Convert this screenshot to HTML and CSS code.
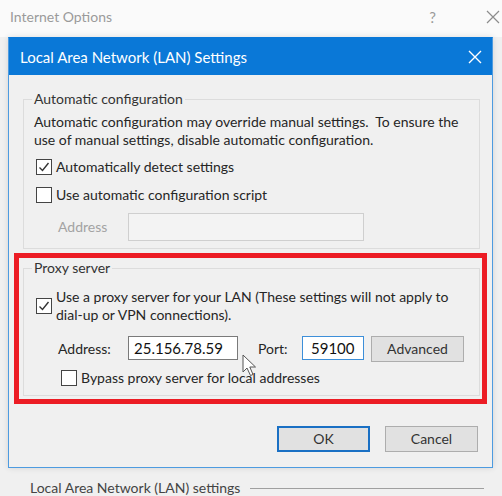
FILE: index.html
```
<!DOCTYPE html>
<html lang="en">
<head>
    <meta charset="UTF-8">
    <meta name="viewport" content="width=device-width, initial-scale=1.0">
    <title>Local Area Network (LAN) Settings</title>
    <link rel="stylesheet" href="styles.css">
</head>
<body>
    <div class="window">
        <div class="window-title">
            <span class="window-name">Internet Options</span>
            <span class="window-help">?</span>
            <svg class="window-close" width="14" height="14" viewBox="0 0 14 14">
                <path d="M1 1 L13 13 M13 1 L1 13" stroke="#8c8c8c" stroke-width="1.2" fill="none"/>
            </svg>
        </div>
        <div class="window-body">
            <div class="dialog">
                <div class="dialog-title">
                    <span>Local Area Network (LAN) Settings</span>
                    <svg class="dialog-close" width="14" height="14" viewBox="0 0 14 14">
                        <path d="M1 1 L13 13 M13 1 L1 13" stroke="#ffffff" stroke-width="1.4" fill="none"/>
                    </svg>
                </div>
                <div class="dialog-body">
                    <fieldset class="group group-auto">
                        <legend>Automatic configuration</legend>
                        <p class="description">Automatic configuration may override manual settings.&nbsp; To ensure the<br>use of manual settings, disable automatic configuration.</p>
                        <div class="check-row">
                            <span class="checkbox checked">
                                <svg width="14" height="14" viewBox="0 0 14 14"><path d="M2.5 7.5 L5.5 10.5 L11.5 3" stroke="#333" stroke-width="1.4" fill="none"/></svg>
                            </span>
                            <span>Automatically detect settings</span>
                        </div>
                        <div class="check-row">
                            <span class="checkbox"></span>
                            <span>Use automatic configuration script</span>
                        </div>
                        <div class="field-row indent">
                            <span class="field-label disabled">Address</span>
                            <span class="textbox textbox-disabled"></span>
                        </div>
                    </fieldset>

                    <fieldset class="group group-proxy">
                        <legend>Proxy server</legend>
                        <div class="check-row tall">
                            <span class="checkbox checked">
                                <svg width="14" height="14" viewBox="0 0 14 14"><path d="M2.5 7.5 L5.5 10.5 L11.5 3" stroke="#333" stroke-width="1.4" fill="none"/></svg>
                            </span>
                            <span>Use a proxy server for your LAN (These settings will not apply to<br>dial-up or VPN connections).</span>
                        </div>
                        <div class="field-row indent proxy-row">
                            <span class="field-label">Address:</span>
                            <span class="textbox textbox-address">25.156.78.59</span>
                            <span class="port-label">Port:</span>
                            <span class="textbox textbox-port">59100</span>
                            <span class="button button-advanced">Advanced</span>
                        </div>
                        <div class="check-row bypass">
                            <span class="checkbox"></span>
                            <span>Bypass proxy server for local addresses</span>
                        </div>
                    </fieldset>

                    <div class="dialog-buttons">
                        <span class="button button-default">OK</span>
                        <span class="button">Cancel</span>
                    </div>
                </div>

                <!-- red annotation box -->
                <div class="highlight"></div>
                <svg class="cursor" width="15" height="23" viewBox="0 0 15 23">
                    <path d="M1 1 L1 18 L5 14 L8.5 21.5 L11 20.5 L7.8 13 L13.5 13 Z" fill="#fff" stroke="#555" stroke-width="1"/>
                </svg>
            </div>
            <div class="lan-section">
                <span>Local Area Network (LAN) settings</span>
                <div class="rule"></div>
            </div>
        </div>
    </div>
</body>
</html>
```

FILE: styles.css
```
* {
    margin: 0;
    padding: 0;
    box-sizing: border-box;
}
body {
    width: 502px;
    height: 496px;
    overflow: hidden;
    font-family: Lato, 'Noto Sans', sans-serif;
    font-size: 14px;
    line-height: 18px;
    color: #262626;
    background-color: #f0f0f0;
}
.window-title {
    height: 37px;
    display: flex;
    align-items: center;
    padding: 0 0 3px 10px;
    background-color: #fafafa;
}
.window-name {
    flex: 1;
    font-size: 14px;
    color: #9a9a9a;
}
.window-help {
    font-size: 15px;
    color: #9a9a9a;
    margin-right: 50px;
}
.window-close {
    margin-right: 2px;
}
.window-body {
    background-color: #f0f0f0;
    height: 459px;
}
.dialog {
    position: relative;
    width: 485px;
    margin-left: 8px;
    background-color: #f0f0f0;
    border: 1px solid #4d9be0;
    border-top-color: #0a78d7;
    box-shadow: 0 0 6px rgba(0, 0, 0, 0.12);
}
.dialog-title {
    height: 37px;
    display: flex;
    align-items: center;
    justify-content: space-between;
    padding: 0 10px 0 11px;
    background-color: #0a78d7;
    color: white;
    font-size: 15px;
}
.dialog-body {
    padding: 15px 12px 15px 14px;
}
.group {
    border: 1px solid #dcdcdc;
    padding: 0 10px 7px 10px;
}
.group legend {
    padding: 0 2px;
    margin-left: -2px;
    line-height: 18px;
    color: #333;
}
.group-auto {
    padding-top: 5px;
}
.group-proxy {
    margin-top: 10px;
    padding-top: 11px;
    padding-bottom: 7px;
}
.description {
    margin-bottom: 8px;
    white-space: nowrap;
}
.check-row {
    display: flex;
    align-items: center;
    min-height: 20px;
    margin-bottom: 8px;
    white-space: nowrap;
}
.check-row.tall {
    margin-bottom: 12px;
}
.check-row.bypass {
    margin: 6px 0 0 25px;
}
.checkbox {
    flex: none;
    width: 16px;
    height: 16px;
    margin: 0 4px 0 2px;
    border: 1px solid #444;
    background-color: white;
    display: flex;
    align-items: center;
    justify-content: center;
}
.field-row {
    display: flex;
    align-items: center;
}
.indent {
    padding-left: 24px;
}
.field-label {
    width: 70px;
}
.field-label.disabled {
    color: #a3a3a3;
}
.textbox {
    height: 24px;
    border: 1px solid #7a7a7a;
    background-color: white;
    padding: 0 5px;
    font-size: 15px;
    line-height: 22px;
    color: #111;
}
.textbox-disabled {
    width: 236px;
    height: 28px;
    border-color: #cfcfcf;
    background-color: #f3f3f3;
}
.proxy-row {
    align-items: flex-start;
}
.proxy-row .field-label,
.proxy-row .port-label {
    line-height: 26px;
}
.textbox-address {
    width: 110px;
}
.port-label {
    margin-left: 20px;
    width: 44px;
}
.textbox-port {
    width: 62px;
    border-color: #3d8fd9;
    padding-left: 8px;
}
.button {
    display: flex;
    align-items: center;
    justify-content: center;
    width: 93px;
    height: 26px;
    background-color: #e1e1e1;
    border: 1px solid #adadad;
    color: #333;
}
.button-advanced {
    margin-left: 7px;
}
.dialog-buttons {
    display: flex;
    justify-content: flex-end;
    gap: 15px;
    margin-top: 30px;
    padding-right: 2px;
}
.button-default {
    border: 2px solid #1a70c4;
}
.highlight {
    position: absolute;
    left: 5px;
    top: 215px;
    width: 473px;
    height: 151px;
    border: 5px solid #ec1c24;
}
.cursor {
    position: absolute;
    left: 233px;
    top: 316px;
}
.lan-section {
    display: flex;
    align-items: center;
    padding: 11px 18px 0 30px;
    color: #444;
}
.lan-section .rule {
    flex: 1;
    height: 1px;
    margin-left: 10px;
    background-color: #a0a0a0;
}
```
